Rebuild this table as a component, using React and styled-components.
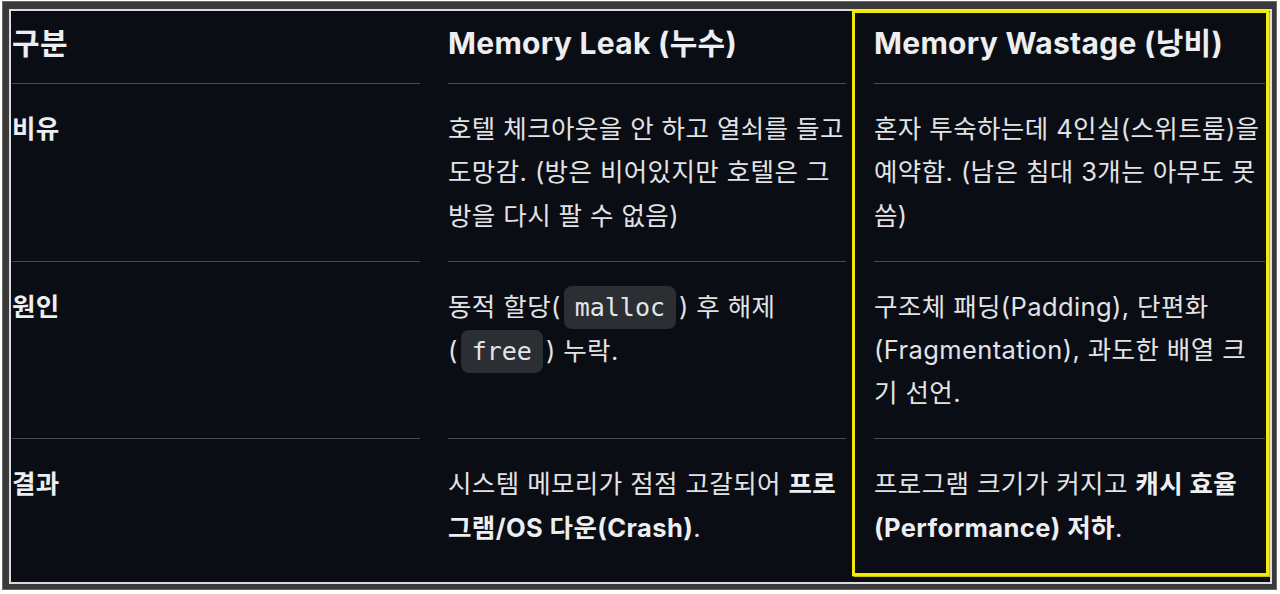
import React from "react";
import styled, { createGlobalStyle } from "styled-components";

const Global = createGlobalStyle`
  html, body { margin: 0; padding: 0; background: #ffffff; }
  #root { width: 1280px; height: 594px; overflow: hidden; }
`;

const Frame = styled.div`
  box-sizing: border-box;
  margin: 1px 3px 4px 2px;
  height: 589px;
  background: #3a3a3a;
  padding: 8px 5px 6px 7px;
  box-shadow: inset 0 0 0 1px #6a6a6a;
`;

const Screen = styled.div`
  box-sizing: border-box;
  height: 100%;
  border: 2px solid #dcdcdc;
  background: #0a0d14;
  padding: 0 5px 0 1px;
  font-family: "Inter", "Noto Sans CJK KR", sans-serif;
`;

const Table = styled.div`
  display: grid;
  grid-template-columns: 408px 398px 1fr;
  column-gap: 28px;
`;

const Cell = styled.div`
  box-sizing: border-box;
  grid-column: ${(p) => p.$col};
  grid-row: ${(p) => p.$row};
  border-bottom: ${(p) => (p.$last ? "none" : "1.5px solid #46494f")};
  padding: ${(p) => (p.$head ? "11px 0 18px" : "23px 0 24px")};
  font-size: ${(p) => (p.$head ? "30px" : "25.5px")};
  line-height: 43.2px;
  font-weight: ${(p) => (p.$head || p.$label ? 700 : 400)};
  color: ${(p) => (p.$head || p.$label ? "#eceef1" : "#e2e3e5")};
  letter-spacing: ${(p) => (p.$head ? "0.3px" : "0.4px")};
`;

const Strong = styled.b`
  font-weight: 700;
  color: #eceef1;
`;

const Code = styled.code`
  font-family: "DejaVu Sans Mono", "Liberation Mono", monospace;
  font-size: 25px;
  letter-spacing: 0;
  background: #2b2e33;
  color: #e4e5e7;
  border-radius: 8px;
  padding: 7px 11px;
  margin: 0 3px;
`;

const Highlight = styled.div`
  grid-column: 3;
  grid-row: 1 / span 4;
  margin: -1px -4px -3px -22px;
  border: 3px solid #f2ea0a;
  box-shadow: 0 0 1px 0.5px #c9c100;
  pointer-events: none;
  z-index: 2;
`;

const rows = [
  {
    label: "비유",
    leak: <>호텔 체크아웃을 안 하고 열쇠를 들고 도망감. (방은 비어있지만 호텔은 그 방을 다시 팔 수 없음)</>,
    waste: <>혼자 투숙하는데 4인실(스위트룸)을 예약함. (남은 침대 3개는 아무도 못 씀)</>,
  },
  {
    label: "원인",
    leak: (
      <>
        동적 할당(<Code>malloc</Code>) 후 해제 (<Code>free</Code>) 누락.
      </>
    ),
    waste: <>구조체 패딩(Padding), 단편화(Fragmentation), 과도한 배열 크기 선언.</>,
  },
  {
    label: "결과",
    leak: (
      <>
        시스템 메모리가 점점 고갈되어 <Strong>프로그램/OS 다운(Crash)</Strong>.
      </>
    ),
    waste: (
      <>
        프로그램 크기가 커지고 <Strong>캐시 효율(Performance) 저하</Strong>.
      </>
    ),
  },
];

export default function App() {
  return (
    <>
      <Global />
      <Frame>
        <Screen>
          <Table>
            <Cell $head $col={1} $row={1}>구분</Cell>
            <Cell $head $col={2} $row={1}>Memory Leak (누수)</Cell>
            <Cell $head $col={3} $row={1}>Memory Wastage (낭비)</Cell>
            {rows.map((r, i) => {
              const last = i === rows.length - 1;
              return (
                <React.Fragment key={r.label}>
                  <Cell $label $last={last} $col={1} $row={i + 2}>{r.label}</Cell>
                  <Cell $last={last} $col={2} $row={i + 2}>{r.leak}</Cell>
                  <Cell $last={last} $col={3} $row={i + 2}>{r.waste}</Cell>
                </React.Fragment>
              );
            })}
            <Highlight />
          </Table>
        </Screen>
      </Frame>
    </>
  );
}
